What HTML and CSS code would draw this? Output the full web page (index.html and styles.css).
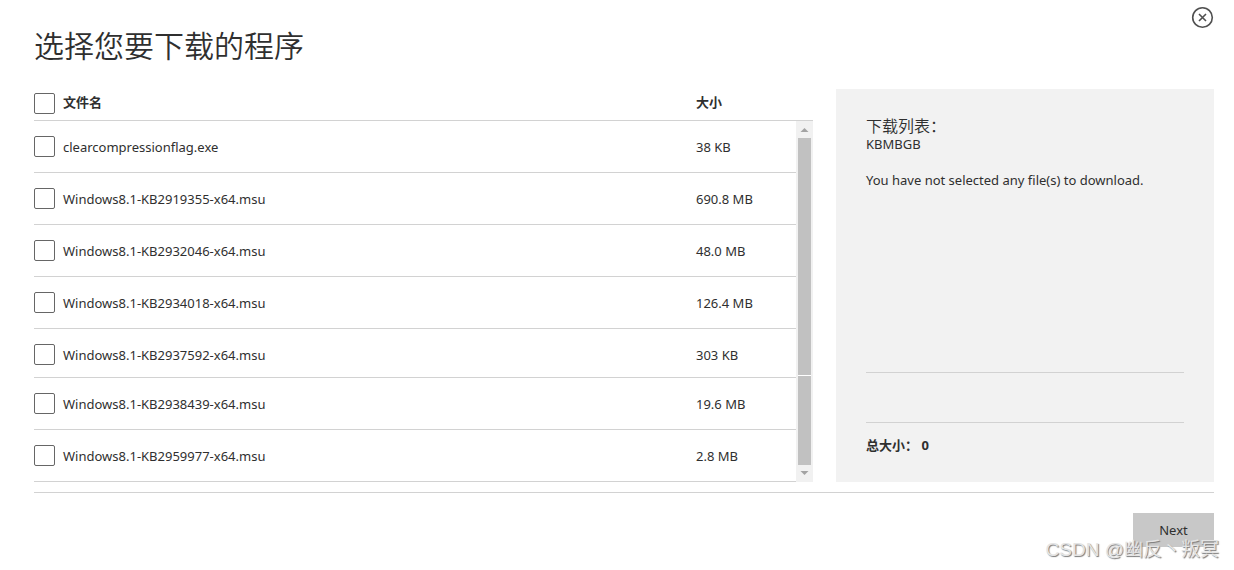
FILE: index.html
```html
<!DOCTYPE html>
<html lang="zh-CN">
<head>
  <meta charset="UTF-8">
  <meta name="viewport" content="width=device-width, initial-scale=1">
  <title>选择您要下载的程序</title>
  <link rel="stylesheet" href="styles.css">
</head>
<body>
  <main class="dialog">
    <header class="dialog-header">
      <h1>选择您要下载的程序</h1>
      <button type="button" class="close" aria-label="Close">
        <svg width="23" height="23" viewBox="0 0 23 23" fill="none" stroke="#505050">
          <circle cx="11.5" cy="11.5" r="9.8" stroke-width="1.6"/>
          <path d="M8 8l7 7M15 8l-7 7" stroke-width="1.6"/>
        </svg>
      </button>
    </header>

    <div class="content">
      <section class="files">
        <table class="files-head">
          <tr>
            <th><label class="file"><input type="checkbox" name="all"><span>文件名</span></label></th>
            <th class="size">大小</th>
          </tr>
        </table>
        <div class="files-scroll">
          <table class="files-body">
            <tr>
              <td><label class="file"><input type="checkbox" name="file1"><span>clearcompressionflag.exe</span></label></td>
              <td class="size">38 KB</td>
            </tr>
            <tr>
              <td><label class="file"><input type="checkbox" name="file2"><span>Windows8.1-KB2919355-x64.msu</span></label></td>
              <td class="size">690.8 MB</td>
            </tr>
            <tr>
              <td><label class="file"><input type="checkbox" name="file3"><span>Windows8.1-KB2932046-x64.msu</span></label></td>
              <td class="size">48.0 MB</td>
            </tr>
            <tr>
              <td><label class="file"><input type="checkbox" name="file4"><span>Windows8.1-KB2934018-x64.msu</span></label></td>
              <td class="size">126.4 MB</td>
            </tr>
            <tr class="short">
              <td><label class="file"><input type="checkbox" name="file5"><span>Windows8.1-KB2937592-x64.msu</span></label></td>
              <td class="size">303 KB</td>
            </tr>
            <tr>
              <td><label class="file"><input type="checkbox" name="file6"><span>Windows8.1-KB2938439-x64.msu</span></label></td>
              <td class="size">19.6 MB</td>
            </tr>
            <tr>
              <td><label class="file"><input type="checkbox" name="file7"><span>Windows8.1-KB2959977-x64.msu</span></label></td>
              <td class="size">2.8 MB</td>
            </tr>
          </table>
          <div class="scrollbar" aria-hidden="true">
            <svg class="arrow" viewBox="0 0 17 17"><path d="M4.5 11L8.5 7L12.5 11z" fill="#a3a3a3"/></svg>
            <div class="thumb thumb-top"></div>
            <div class="thumb thumb-bottom"></div>
            <svg class="arrow" viewBox="0 0 17 17"><path d="M4.5 6L8.5 10L12.5 6z" fill="#a3a3a3"/></svg>
          </div>
        </div>
      </section>

      <aside class="summary">
        <h2>下载列表：</h2>
        <p class="units">KBMBGB</p>
        <p class="message">You have not selected any file(s) to download.</p>
        <div class="summary-box"></div>
        <p class="total">总大小： <span>0</span></p>
      </aside>
    </div>

    <footer class="dialog-footer">
      <button type="button" class="next">Next</button>
    </footer>
  </main>
  <div class="watermark">CSDN @幽反丶叛冥</div>
</body>
</html>
```
FILE: styles.css
```css
* {
  box-sizing: border-box;
}
body {
  margin: 0;
  position: relative;
  background-color: #fff;
  color: #2f2f2f;
  font-family: "Noto Sans", "Noto Sans CJK SC", sans-serif;
  font-size: 13px;
  line-height: 18px;
}
h1, h2, p {
  margin: 0;
}
.dialog {
  padding: 6px 20px 23px 34px;
}
.dialog-header {
  display: flex;
  justify-content: space-between;
  align-items: flex-start;
  height: 83px;
}
h1 {
  padding-top: 18px;
  font-size: 30px;
  line-height: 44px;
  font-weight: 350;
}
.close {
  padding: 0;
  border: none;
  background: none;
  cursor: pointer;
}
.close svg {
  display: block;
}
.content {
  display: grid;
  grid-template-columns: 1fr 378px;
  gap: 23px;
  padding-bottom: 10px;
  border-bottom: 1px solid #d2d2d2;
}
table {
  width: 100%;
  border-collapse: separate;
  border-spacing: 0;
  table-layout: fixed;
}
th, td {
  padding: 0;
  text-align: left;
  vertical-align: top;
  border-bottom: 1px solid #d2d2d2;
}
th {
  height: 32px;
  padding-top: 4px;
}
td {
  height: 52px;
  padding-top: 15px;
}
.short td {
  height: 49px;
}
.files-head .size {
  width: 117px;
}
.files-body .size {
  width: 100px;
}
td.size {
  padding-top: 17px;
}
.file {
  display: flex;
  gap: 8px;
}
.file span {
  padding-top: 2px;
}
th .file span {
  padding-top: 0;
}
.file input {
  appearance: none;
  width: 21px;
  height: 21px;
  margin: 0;
  border: 1px solid #666;
  border-radius: 2px;
  background-color: #fff;
}
.file input:checked {
  background-color: #0067b8;
}
.files-scroll {
  display: flex;
}
.files-body {
  flex: 1;
}
.scrollbar {
  display: flex;
  flex-direction: column;
  width: 17px;
  background-color: #f1f1f1;
}
.arrow {
  width: 17px;
  height: 17px;
}
.thumb {
  margin: 0 2px;
  background-color: #c1c1c1;
}
.thumb-top {
  flex: 8;
  border-bottom: 1px solid #fff;
}
.thumb-bottom {
  flex: 3;
}
.summary {
  display: flex;
  flex-direction: column;
  padding: 28px 30px;
  background-color: #f2f2f2;
}
h2 {
  font-size: 16px;
  line-height: 18px;
  font-weight: 350;
}
.message {
  margin-top: 18px;
}
.summary-box {
  height: 51px;
  margin-top: auto;
  border: solid #d2d2d2;
  border-width: 1px 0;
}
.total {
  padding-top: 13px;
  font-weight: bold;
}
.dialog-footer {
  display: flex;
  justify-content: flex-end;
  padding-top: 20px;
}
.next {
  width: 81px;
  height: 34px;
  padding: 0;
  border: none;
  background-color: #c8c8c8;
  color: #2f2f2f;
  font: inherit;
  cursor: pointer;
}
.watermark {
  position: absolute;
  right: 15px;
  bottom: 8px;
  color: #e4e4e4;
  font-family: "Liberation Sans", "Noto Sans CJK SC", sans-serif;
  font-size: 19px;
  line-height: 24px;
  text-shadow: 1px 1px 1px #777;
  pointer-events: none;
}
```
